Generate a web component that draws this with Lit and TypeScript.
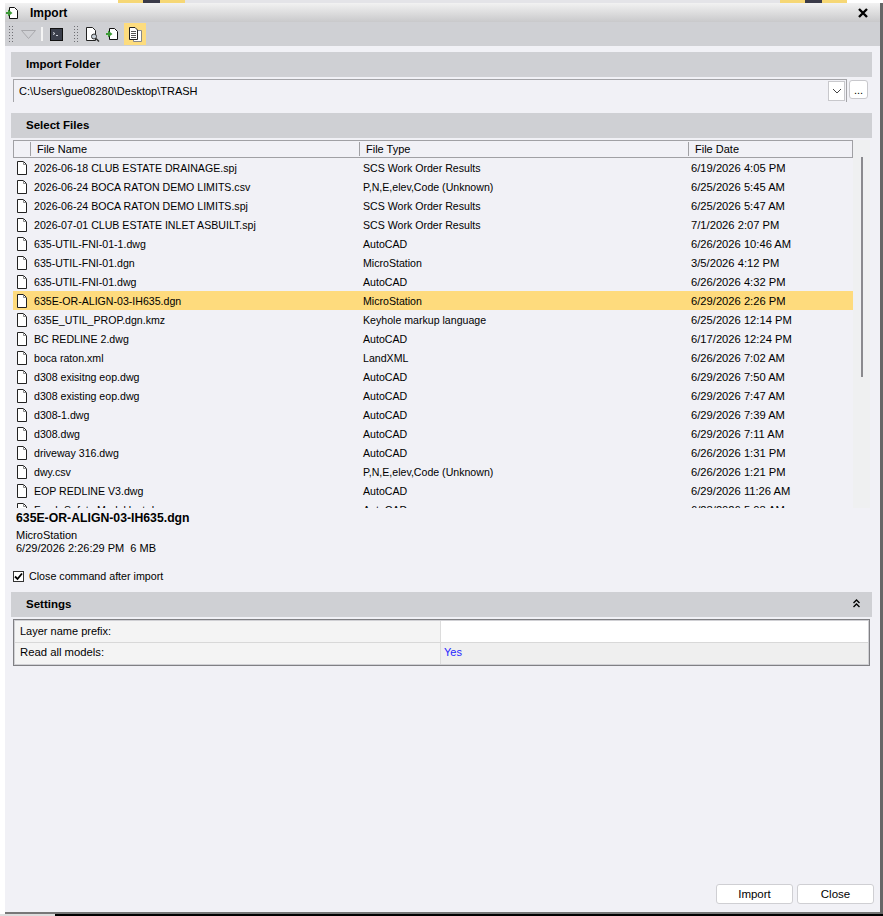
import { LitElement, css, html, svg } from "lit";
import { customElement } from "lit/decorators.js";

type FileRow = [string, string, string];

const FOLDER = "C:\\Users\\gue08280\\Desktop\\TRASH";
const ACTIVE_ROW = 7;

const FILES: FileRow[] = [
    ["2026-06-18 CLUB ESTATE DRAINAGE.spj", "SCS Work Order Results", "6/19/2026 4:05 PM"],
    ["2026-06-24 BOCA RATON DEMO LIMITS.csv", "P,N,E,elev,Code (Unknown)", "6/25/2026 5:45 AM"],
    ["2026-06-24 BOCA RATON DEMO LIMITS.spj", "SCS Work Order Results", "6/25/2026 5:47 AM"],
    ["2026-07-01 CLUB ESTATE INLET ASBUILT.spj", "SCS Work Order Results", "7/1/2026 2:07 PM"],
    ["635-UTIL-FNI-01-1.dwg", "AutoCAD", "6/26/2026 10:46 AM"],
    ["635-UTIL-FNI-01.dgn", "MicroStation", "3/5/2026 4:12 PM"],
    ["635-UTIL-FNI-01.dwg", "AutoCAD", "6/26/2026 4:32 PM"],
    ["635E-OR-ALIGN-03-IH635.dgn", "MicroStation", "6/29/2026 2:26 PM"],
    ["635E_UTIL_PROP.dgn.kmz", "Keyhole markup language", "6/25/2026 12:14 PM"],
    ["BC REDLINE 2.dwg", "AutoCAD", "6/17/2026 12:24 PM"],
    ["boca raton.xml", "LandXML", "6/26/2026 7:02 AM"],
    ["d308 exisitng eop.dwg", "AutoCAD", "6/29/2026 7:50 AM"],
    ["d308 existing eop.dwg", "AutoCAD", "6/29/2026 7:47 AM"],
    ["d308-1.dwg", "AutoCAD", "6/29/2026 7:39 AM"],
    ["d308.dwg", "AutoCAD", "6/29/2026 7:11 AM"],
    ["driveway 316.dwg", "AutoCAD", "6/26/2026 1:31 PM"],
    ["dwy.csv", "P,N,E,elev,Code (Unknown)", "6/26/2026 1:21 PM"],
    ["EOP REDLINE V3.dwg", "AutoCAD", "6/29/2026 11:26 AM"],
    ["Fresh Safety Model last.dwg", "AutoCAD", "6/28/2026 5:08 AM"],
];

const fileIcon = svg`<svg class="file-icon" width="10" height="14" viewBox="0 0 10 14">
    <path d="M.5.5H6.5L9.5 3.5V13.5H.5Z" fill="#fff" stroke="#222"/>
    <path d="M6.5.5V3.5H9.5" fill="none" stroke="#888"/>
</svg>`;

const importIcon = svg`<svg width="12" height="12" viewBox="0 0 12 12">
    <path d="M3.5.5H8.5L11.5 3.5V11.5H3.5Z" fill="#fff" stroke="#111"/>
    <path d="M0 5H2V2.5L6.5 6 2 9.5V7H0Z" fill="#3c9a35"/>
</svg>`;

@customElement("app-root")
export class AppRoot extends LitElement {
    renderToolbar() {return html`
        <div class="toolbar">
            <span class="grip"></span>
            <svg class="tool-arrow" width="15" height="9" viewBox="0 0 15 9">
                <path d="M.5.5H14.5L7.5 8.5Z" fill="none" stroke="#a8a8ac"/>
            </svg>
            <span class="tool-sep"></span>
            <svg class="tool-console" width="13" height="13" viewBox="0 0 13 13">
                <rect x=".5" y=".5" width="12" height="12" fill="#3b3f4c" stroke="#111"/>
                <path d="M3 4.5L5 5.5 3 6.5M6 7.5H8" fill="none" stroke="#cfd2da"/>
            </svg>
            <span class="grip second"></span>
            <svg class="tool-search" width="14" height="15" viewBox="0 0 14 15">
                <path d="M.5.5H6.5L9.5 3.5V13.5H.5Z" fill="#fff" stroke="#222"/>
                <circle cx="8" cy="9.5" r="2.5" fill="#c8d0d8" stroke="#333"/>
                <path d="M10 11.5L13 14.5" stroke="#333" stroke-width="1.5"/>
            </svg>
            <span class="tool-import">${importIcon}</span>
            <span class="tool-active">
                <svg width="13" height="15" viewBox="0 0 13 15">
                    <path d="M4.5 3.5H12.5V14.5H4.5Z" fill="#fff" stroke="#888"/>
                    <path d="M.5.5H6L8.5 3V12.5H.5Z" fill="#fff" stroke="#222"/>
                    <path d="M2 4.5H7M2 6.5H7M2 8.5H7M2 10.5H7" stroke="#555"/>
                </svg>
            </span>
        </div>
    `}

    renderTable() {return html`
        <div class="table">
            <div class="table-main">
                <div class="table-head">
                    <span class="head-first"><span>File Name</span></span>
                    <span>File Type</span>
                    <span>File Date</span>
                </div>
                <div class="rows">
                    ${FILES.map((f, i) => html`
                        <div class="row ${i === ACTIVE_ROW ? "active" : ""}">
                            <span class="name">${fileIcon}${f[0]}</span>
                            <span class="type">${f[1]}</span>
                            <span class="date">${f[2]}</span>
                        </div>
                    `)}
                </div>
            </div>
            <div class="scroll"><span class="thumb"></span></div>
        </div>
    `}

    render() {return html`
        <div class="strip">
            <i class="w1"></i><i class="y"></i><i class="d"></i><i class="y"></i>
            <i class="w2"></i><i class="y"></i><i class="d"></i><i class="y"></i>
        </div>
        <div class="window">
            <div class="title">
                ${importIcon}
                <b>Import</b>
                <svg class="close-x" width="10" height="10" viewBox="0 0 10 10">
                    <path d="M1 1L9 9M9 1L1 9" stroke="#000" stroke-width="2.4"/>
                </svg>
            </div>
            ${this.renderToolbar()}
            <div class="body">
                <div class="bar">Import Folder</div>
                <div class="combo">
                    <div class="combo-box">
                        <span class="path">${FOLDER}</span>
                        <span class="combo-drop">
                            <svg width="10" height="6" viewBox="0 0 10 6">
                                <path d="M1 1L5 5 9 1" fill="none" stroke="#444"/>
                            </svg>
                        </span>
                    </div>
                    <span class="browse">...</span>
                </div>
                <div class="bar files">Select Files</div>
                ${this.renderTable()}
                <div class="detail">
                    <div class="detail-name">${FILES[ACTIVE_ROW][0]}</div>
                    <div>MicroStation</div>
                    <div>6/29/2026 2:26:29 PM&nbsp;&nbsp;6 MB</div>
                </div>
                <label class="check">
                    <span class="box">
                        <svg width="9" height="9" viewBox="0 0 9 9">
                            <path d="M1 4.5L3.5 7 8 1.5" fill="none" stroke="#000" stroke-width="1.8"/>
                        </svg>
                    </span>
                    Close command after import
                </label>
                <div class="bar settings">
                    Settings
                    <svg width="7" height="9" viewBox="0 0 7 9">
                        <path d="M.5 4L3.5 1 6.5 4M.5 8L3.5 5 6.5 8" fill="none" stroke="#000" stroke-width="1.4"/>
                    </svg>
                </div>
                <div class="props">
                    <div class="prop-label">Layer name prefix:</div>
                    <div class="prop-value"></div>
                    <div class="prop-label last">Read all models:</div>
                    <div class="prop-value alt">Yes</div>
                </div>
                <div class="footer">
                    <button>Import</button>
                    <button>Close</button>
                </div>
            </div>
        </div>
        <div class="under"></div>
    `}

    static styles = css`
        :host {
            display: flex;
            flex-direction: column;
            width: 883px;
            height: 916px;
            overflow: hidden;
            background-color: #fff;
            font-family: "Liberation Sans", Arial, sans-serif;
            font-size: 11px;
            color: #000;
        }

        .strip {
            height: 3px;
            display: flex;
            flex: none;
        }
        .strip i { display: block; height: 100%; }
        .strip .w1 { width: 118px; }
        .strip .w2 { width: 595px; background-color: #e4e4e8; }
        .strip .y { width: 25px; background-color: #f6d775; }
        .strip .d { width: 17px; background-color: #3a3a48; }

        .window {
            flex: 1;
            margin-left: 5px;
            width: 875px;
            display: flex;
            flex-direction: column;
            background-color: #f1f1f6;
            border-bottom: 2px solid #777;
            box-shadow: 3px 0 0 #666;
        }

        .title {
            height: 19px;
            flex: none;
            display: flex;
            align-items: center;
            padding: 0 12px 0 1px;
            background: linear-gradient(#f2f2f2, #c9c9cb);
        }
        .title b {
            margin-left: 12px;
            font-size: 12px;
        }
        .close-x { margin-left: auto; }

        .toolbar {
            height: 24px;
            flex: none;
            display: flex;
            align-items: center;
            background-color: #cfd0d4;
        }
        .grip {
            width: 5px;
            height: 19px;
            margin-left: 3px;
            background-image: radial-gradient(circle, #6f6f74 .8px, transparent 1px);
            background-size: 3px 3px;
        }
        .grip.second { margin-left: 10px; }
        .tool-arrow { margin-left: 8px; }
        .tool-sep {
            width: 2px;
            height: 14px;
            margin-left: 5px;
            background-color: #f4f4f4;
        }
        .tool-console { margin-left: 7px; }
        .tool-search { margin-left: 8px; }
        .tool-import { display: flex; margin-left: 6px; }
        .tool-active {
            width: 22px;
            height: 22px;
            margin-left: 6px;
            display: flex;
            align-items: center;
            justify-content: center;
            background-color: #fddc7e;
        }

        .body {
            flex: 1;
            min-height: 0;
            display: flex;
            flex-direction: column;
            padding: 6px 6px 8px;
        }

        .bar {
            height: 25px;
            flex: none;
            width: 861px;
            box-sizing: border-box;
            padding: 0 12px 2px 15px;
            display: flex;
            align-items: center;
            justify-content: space-between;
            background-color: #cfd0d4;
            font-weight: bold;
            font-size: 11.5px;
        }
        .bar.files { margin-top: 11px; }
        .bar.settings { margin-top: 9px; }

        .combo {
            height: 23px;
            flex: none;
            margin: 2px 0 0 2px;
            display: flex;
            align-items: flex-start;
        }
        .combo-box {
            width: 834px;
            height: 100%;
            box-sizing: border-box;
            padding-right: 1px;
            display: flex;
            align-items: center;
            border: solid #a4a4a8;
            border-width: 1px 1px 0 1px;
        }
        .path {
            flex: 1;
            padding-left: 5px;
        }
        .combo-drop {
            width: 17px;
            height: 20px;
            box-sizing: border-box;
            display: flex;
            align-items: center;
            justify-content: center;
            background-color: #fff;
            border: 1px solid #c8c8cc;
        }
        .browse {
            width: 19px;
            height: 19px;
            box-sizing: border-box;
            margin: 1px 0 0 2px;
            text-align: center;
            line-height: 19px;
            background-color: #fff;
            border: 1px solid #c8c8cc;
            border-radius: 3px;
        }

        .table {
            height: 368px;
            flex: none;
            margin: 2px 0 0 2px;
            width: 857px;
            display: flex;
        }
        .table-main {
            width: 840px;
            display: flex;
            flex-direction: column;
        }
        .table-head {
            height: 18px;
            flex: none;
            box-sizing: border-box;
            display: grid;
            grid-template-columns: 345px 329px 1fr;
            align-items: center;
            border: 1px solid #a0a0a4;
        }
        .table-head > span {
            height: 14px;
            line-height: 14px;
            padding-left: 6px;
            border-left: 1px solid #a0a0a4;
        }
        .table-head .head-first {
            border: 0;
            padding-left: 16px;
        }
        .head-first span {
            display: block;
            border-left: 1px solid #a0a0a4;
            padding-left: 6px;
        }

        .rows {
            flex: 1;
            min-height: 0;
            overflow: hidden;
        }
        .row {
            height: 19px;
            display: grid;
            grid-template-columns: 346px 329px 1fr;
            align-items: center;
            white-space: nowrap;
        }
        .row .type { padding-left: 4px; font-size: 10.6px; }
        .row .date { padding-left: 3px; font-size: 11.2px; }
        .row.active { background-color: #fedb7d; }
        .name {
            display: flex;
            align-items: center;
            gap: 7px;
            padding-left: 4px;
            font-size: 10.6px;
        }
        .file-icon { flex: none; }

        .scroll {
            width: 17px;
            display: flex;
            justify-content: center;
            padding-top: 17px;
            box-sizing: border-box;
            background-color: #eff0f1;
        }
        .thumb {
            width: 2px;
            height: 220px;
            background-color: #8a8a8e;
        }

        .detail {
            margin: 3px 0 0 5px;
            line-height: 13px;
            flex: none;
        }
        .detail-name {
            font-weight: bold;
            height: 17px;
            line-height: 15px;
            margin-bottom: 1px;
            font-size: 12.25px;
        }

        .check {
            flex: none;
            height: 14px;
            margin: 14px 0 0 2px;
            display: flex;
            align-items: center;
            gap: 5px;
            font-size: 10.7px;
        }
        .box {
            width: 11px;
            height: 11px;
            box-sizing: border-box;
            display: flex;
            align-items: center;
            justify-content: center;
            background-color: #fff;
            border: 1px solid #333;
        }

        .props {
            flex: none;
            width: 857px;
            height: 47px;
            margin: 2px 0 0 2px;
            box-sizing: border-box;
            display: grid;
            grid-template-columns: 427px 1fr;
            grid-template-rows: 23px 1fr;
            border: 1px solid #808084;
            outline: 1px solid #d0d0d4;
            outline-offset: -2px;
        }
        .prop-label, .prop-value {
            display: flex;
            align-items: center;
            padding-left: 6px;
            padding-bottom: 1px;
            background-color: #f4f4f4;
            border-bottom: 1px solid #d8d8d8;
        }
        .prop-label { border-right: 1px solid #dcdcdc; }
        .prop-value {
            background-color: #fff;
            padding-left: 3px;
        }
        .prop-label.last {
            border-bottom: 0;
            padding-bottom: 5px;
            font-size: 11.3px;
        }
        .prop-value.alt {
            background-color: #efefef;
            color: #2626ff;
            border-bottom: 0;
            padding-bottom: 5px;
        }

        .footer {
            margin-top: auto;
            display: flex;
            justify-content: flex-end;
            gap: 4px;
        }
        .footer button {
            width: 77px;
            height: 20px;
            padding: 0;
            font: inherit;
            font-size: 11.5px;
            background-color: #fff;
            border: 1px solid #cfcfd3;
            border-radius: 3px;
        }

        .under {
            height: 2px;
            flex: none;
            background: linear-gradient(90deg, #ddd 55px, #000 55px);
        }
    `;
}
